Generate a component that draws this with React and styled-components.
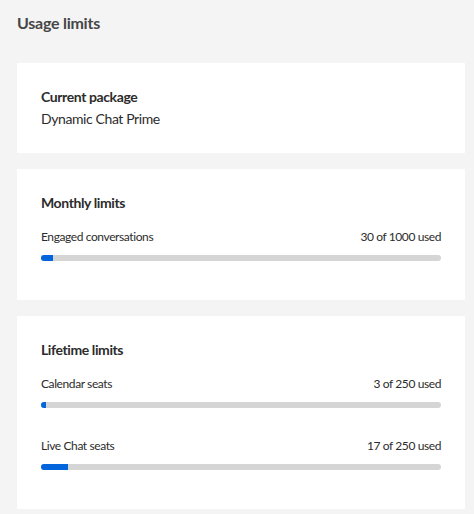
import React from "react";
import styled, { createGlobalStyle } from "styled-components";

const GlobalStyle = createGlobalStyle`
  html, body {
    margin: 0;
    padding: 0;
    background: #f4f4f4;
  }
  body {
    font-family: Lato, "Open Sans", sans-serif;
    color: #2c2c2c;
  }
`;

const Page = styled.div`
  padding: 13px 9px 6px 17px;
`;

const Title = styled.h1`
  margin: 0 0 30px;
  font-size: 16px;
  line-height: 20px;
  font-weight: 700;
  letter-spacing: -0.25px;
  color: #464646;
`;

const CardList = styled.div`
  display: flex;
  flex-direction: column;
  gap: 16px;
`;

const Card = styled.section`
  background: #fff;
  padding: 24px;
  letter-spacing: -0.4px;
`;

const CardTitle = styled.h2`
  margin: 0;
  font-size: 14px;
  line-height: 20px;
  font-weight: 700;
  color: #2c2c2c;
`;

const Value = styled.div`
  margin-top: 2px;
  font-size: 14px;
  line-height: 20px;
`;

const Rows = styled.div`
  margin-top: 16px;
  display: flex;
  flex-direction: column;
  gap: 15px;
`;

const Row = styled.div`
  padding-bottom: 15px;
`;

const RowHead = styled.div`
  display: flex;
  justify-content: space-between;
  font-size: 12px;
  line-height: 16px;
  margin-bottom: 10px;
`;

const Track = styled.div`
  height: 6px;
  border-radius: 3px;
  background: #d5d5d5;
  overflow: hidden;
`;

const Fill = styled.div`
  height: 100%;
  background: #0265dc;
`;

function Limit({ label, used, total }) {
  return (
    <Row>
      <RowHead>
        <span>{label}</span>
        <span>
          {used} of {total} used
        </span>
      </RowHead>
      <Track>
        <Fill style={{ width: `${(used / total) * 100}%` }} />
      </Track>
    </Row>
  );
}

export default function App() {
  return (
    <Page>
      <GlobalStyle />
      <Title>Usage limits</Title>
      <CardList>
        <Card>
          <CardTitle>Current package</CardTitle>
          <Value>Dynamic Chat Prime</Value>
        </Card>
        <Card>
          <CardTitle>Monthly limits</CardTitle>
          <Rows>
            <Limit label="Engaged conversations" used={30} total={1000} />
          </Rows>
        </Card>
        <Card>
          <CardTitle>Lifetime limits</CardTitle>
          <Rows>
            <Limit label="Calendar seats" used={3} total={250} />
            <Limit label="Live Chat seats" used={17} total={250} />
          </Rows>
        </Card>
      </CardList>
    </Page>
  );
}
